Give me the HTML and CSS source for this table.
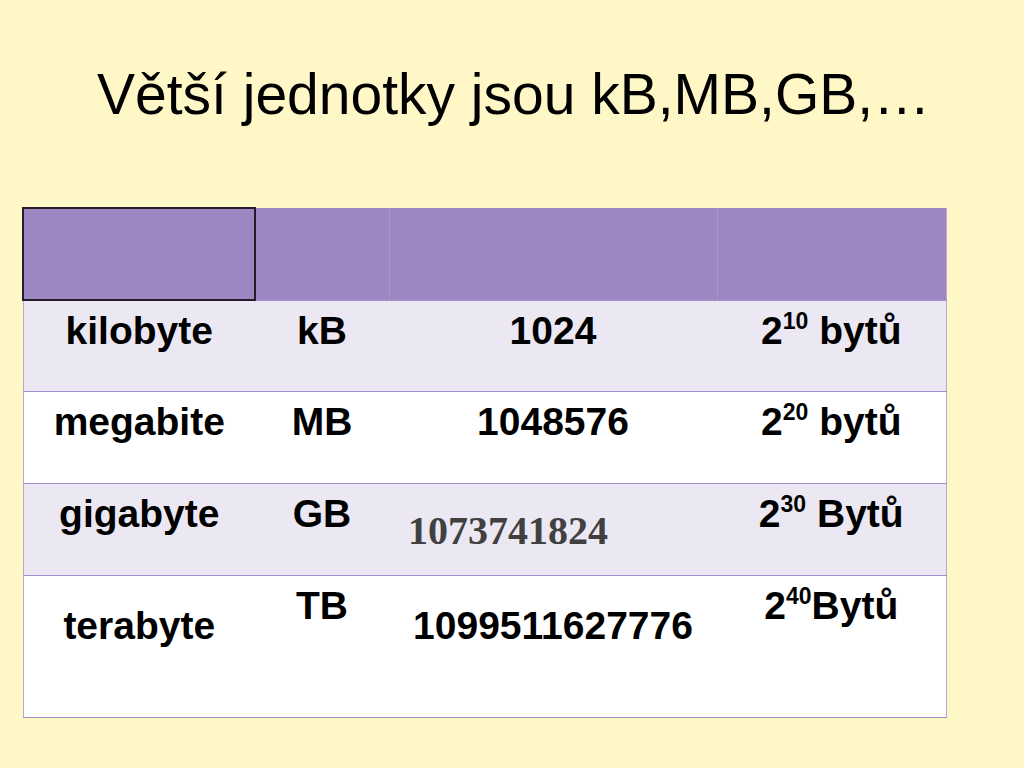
FILE: index.html
```html
<!DOCTYPE html>
<html lang="cs">
<head>
<meta charset="utf-8">
<title>Větší jednotky</title>
<link rel="stylesheet" href="styles.css">
</head>
<body>
<div class="slide">
  <h1 class="title">Větší jednotky jsou kB,MB,GB,…</h1>
  <table class="units">
    <colgroup>
      <col class="c1"><col class="c2"><col class="c3"><col class="c4">
    </colgroup>
    <tr class="head">
      <td class="first"></td><td></td><td class="sep"></td><td class="sep"></td>
    </tr>
    <tr class="shade r1">
      <td>kilobyte</td><td>kB</td><td>1024</td><td>2<sup>10</sup> bytů</td>
    </tr>
    <tr class="plain">
      <td>megabite</td><td>MB</td><td>1048576</td><td>2<sup>20</sup> bytů</td>
    </tr>
    <tr class="shade">
      <td>gigabyte</td><td>GB</td><td class="serif">1073741824</td><td>2<sup>30</sup> Bytů</td>
    </tr>
    <tr class="plain last">
      <td class="low">terabyte</td><td>TB</td><td class="low">1099511627776</td><td>2<sup>40</sup>Bytů</td>
    </tr>
  </table>
</div>
</body>
</html>
```

FILE: styles.css
```css
html, body {
  margin: 0;
  padding: 0;
}
body {
  background: #fff8c6;
  width: 1024px;
  height: 768px;
  overflow: hidden;
}
.slide {
  padding: 66px 0 0 22px;
}
.title {
  margin: 0 0 0 75px;
  font-family: "Liberation Sans", Arial, sans-serif;
  font-weight: 400;
  font-size: 57px;
  line-height: 57px;
  color: #000;
  height: 141px;
}
.units {
  border-collapse: collapse;
  table-layout: fixed;
  width: 923px;
  font-family: "Liberation Sans", Arial, sans-serif;
  font-weight: 700;
  font-size: 39px;
  line-height: 46px;
  color: #000;
  border-left: 1px solid #b7a9d4;
  border-right: 1px solid #b7a9d4;
  border-bottom: 1px solid #a58fca;
}
.c1 { width: 232px; }
.c2 { width: 134px; }
.c3 { width: 328px; }
.c4 { width: 229px; }
.units td {
  box-sizing: border-box;
  padding: 7px 0 0 0;
  text-align: center;
  vertical-align: top;
  white-space: nowrap;
}
.head td {
  background: #9e86c3;
  height: 92px;
  padding: 0;
}
.head td.first {
  border: 2px solid #231d2a;
}
.head td.sep {
  border-left: 1px solid #a893cc;
}
.shade td {
  background: #ebe8f3;
  border-top: 1px solid #a58fca;
  height: 92px;
}
.r1 td {
  height: 91px;
}
.plain td {
  background: #fff;
  border-top: 1px solid #a58fca;
  height: 92px;
}
.last td {
  height: 142px;
}
.units td.low {
  padding-top: 27px;
}
.units td.serif {
  font-family: "Liberation Serif", "Times New Roman", serif;
  font-size: 40px;
  color: #404040;
  text-align: left;
  padding: 24px 0 0 19px;
}
sup {
  font-size: 23px;
  line-height: 0;
  vertical-align: 15px;
}
```
